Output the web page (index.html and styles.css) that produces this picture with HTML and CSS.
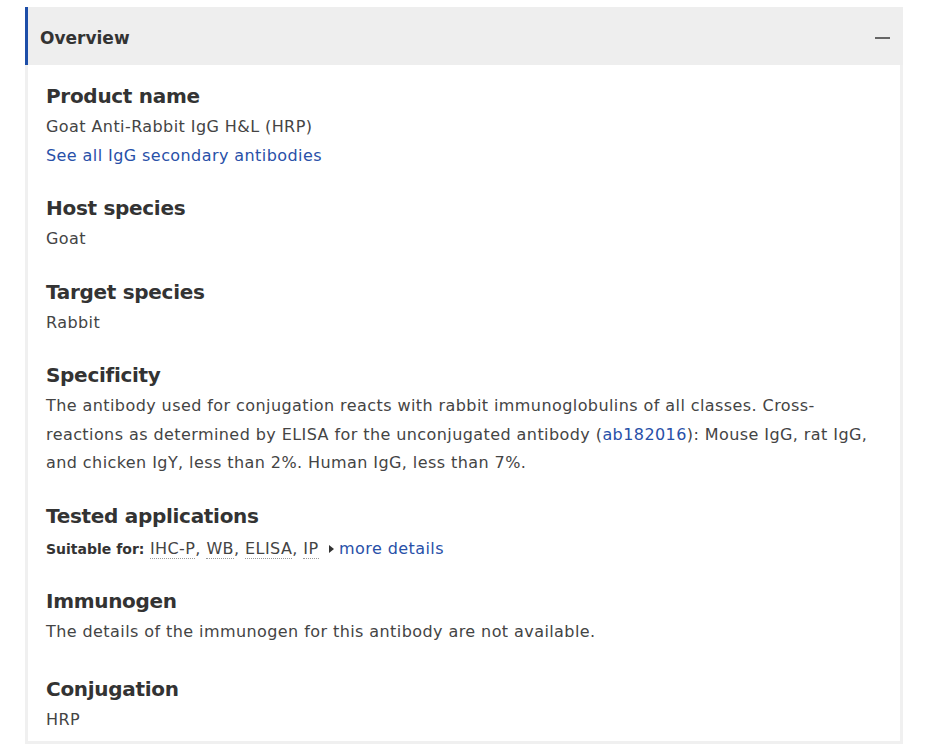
FILE: index.html
```html
<!DOCTYPE html>
<html>
<head>
<meta charset="utf-8">
<link rel="stylesheet" href="styles.css">
</head>
<body>
<div class="page">
  <section class="panel">
    <div class="panel-head">
      <h2 class="panel-title">Overview</h2>
      <span class="collapse" aria-label="collapse"></span>
    </div>
    <div class="panel-body">
      <div class="item">
        <h3 class="item-title">Product name</h3>
        <p class="item-text">Goat Anti-Rabbit IgG H&amp;L (HRP)</p>
        <p class="item-text"><a class="link" href="#">See all IgG secondary antibodies</a></p>
      </div>
      <div class="item">
        <h3 class="item-title">Host species</h3>
        <p class="item-text">Goat</p>
      </div>
      <div class="item">
        <h3 class="item-title">Target species</h3>
        <p class="item-text">Rabbit</p>
      </div>
      <div class="item">
        <h3 class="item-title">Specificity</h3>
        <p class="item-text">The antibody used for conjugation reacts with rabbit immunoglobulins of all classes. Cross-reactions as determined by ELISA for the unconjugated antibody (<a class="link" href="#">ab182016</a>): Mouse IgG, rat IgG, and chicken IgY, less than 2%. Human IgG, less than 7%.</p>
      </div>
      <div class="item">
        <h3 class="item-title">Tested applications</h3>
        <p class="item-text item-apps"><strong class="label">Suitable for:</strong> <abbr class="app">IHC-P</abbr>, <abbr class="app">WB</abbr>, <abbr class="app">ELISA</abbr>, <abbr class="app">IP</abbr> <a class="more" href="#"><span class="tri"></span>more details</a></p>
      </div>
      <div class="item item-wide">
        <h3 class="item-title">Immunogen</h3>
        <p class="item-text">The details of the immunogen for this antibody are not available.</p>
      </div>
      <div class="item item-last">
        <h3 class="item-title">Conjugation</h3>
        <p class="item-text">HRP</p>
      </div>
    </div>
  </section>
</div>
</body>
</html>
```
FILE: styles.css
```css
html, body {
  margin: 0;
  padding: 0;
  background: #fff;
}
body {
  font-family: "DejaVu Sans", "Liberation Sans", sans-serif;
  color: #333;
}
.page {
  padding: 7px 26px 0 25px;
}
.panel {
  display: flex;
  flex-direction: column;
}
.panel-head {
  display: flex;
  align-items: center;
  justify-content: space-between;
  height: 58px;
  background: #eeeeee;
  border-left: 3px solid #1d4ea8;
  padding: 3px 12px 0 12px;
  box-sizing: border-box;
}
.panel-title {
  margin: 0;
  font-size: 17px;
  font-weight: bold;
  color: #333;
}
.collapse {
  display: block;
  width: 15px;
  height: 2px;
  background: #666;
  margin-right: 1px;
}
.panel-body {
  border: 3px solid #f0f0f0;
  border-top: 0;
  padding: 17px 18px 7px 18px;
  display: flex;
  flex-direction: column;
  gap: 24px;
}
.item-title {
  margin: 0 0 3px 0;
  font-size: 20px;
  line-height: 28px;
  font-weight: bold;
  letter-spacing: -0.3px;
  color: #333;
}
.item-text {
  margin: 0;
  font-size: 16px;
  line-height: 28.5px;
  letter-spacing: 0.42px;
  color: #444;
}
.item-apps {
  padding-top: 2px;
}
.item-wide {
  margin-bottom: 4px;
}
.link, .more {
  color: #2850a8;
  text-decoration: none;
}
.label {
  font-weight: bold;
  font-size: 14px;
  letter-spacing: 0;
  color: #333;
}
.app {
  text-decoration: none;
  border-bottom: 1px dotted #999;
  color: #444;
}
.more {
  margin-left: 5px;
}
.tri {
  display: inline-block;
  width: 0;
  height: 0;
  border-top: 4px solid transparent;
  border-bottom: 4px solid transparent;
  border-left: 5px solid #333;
  margin-right: 5px;
  vertical-align: 1px;
}
```
